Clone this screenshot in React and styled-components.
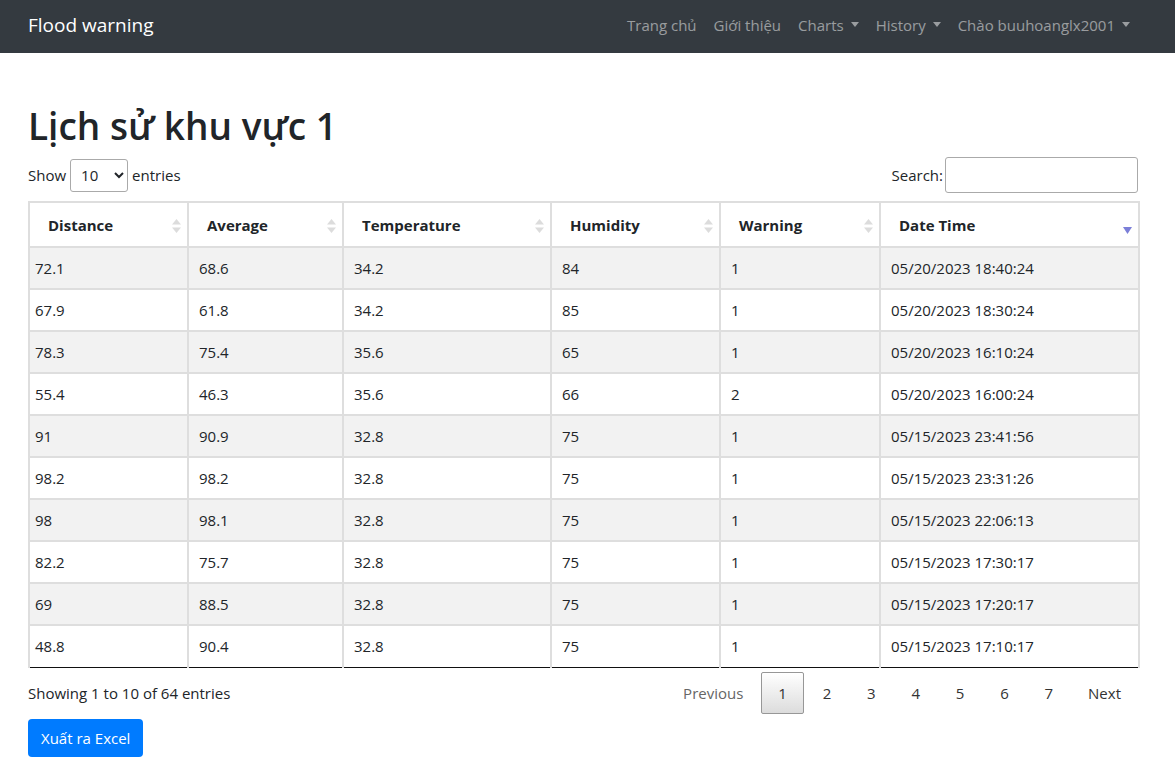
import React from "react";
import styled, { createGlobalStyle } from "styled-components";

const GlobalStyle = createGlobalStyle`
  body {
    margin: 0;
    font-family: "Open Sans", "Noto Sans", sans-serif;
    font-size: 15px;
    color: #212529;
    background: #fff;
  }
`;

const rows = [
  ["72.1", "68.6", "34.2", "84", "1", "05/20/2023 18:40:24"],
  ["67.9", "61.8", "34.2", "85", "1", "05/20/2023 18:30:24"],
  ["78.3", "75.4", "35.6", "65", "1", "05/20/2023 16:10:24"],
  ["55.4", "46.3", "35.6", "66", "2", "05/20/2023 16:00:24"],
  ["91", "90.9", "32.8", "75", "1", "05/15/2023 23:41:56"],
  ["98.2", "98.2", "32.8", "75", "1", "05/15/2023 23:31:26"],
  ["98", "98.1", "32.8", "75", "1", "05/15/2023 22:06:13"],
  ["82.2", "75.7", "32.8", "75", "1", "05/15/2023 17:30:17"],
  ["69", "88.5", "32.8", "75", "1", "05/15/2023 17:20:17"],
  ["48.8", "90.4", "32.8", "75", "1", "05/15/2023 17:10:17"],
];

const columns = [
  { name: "Distance", width: 159 },
  { name: "Average", width: 155 },
  { name: "Temperature", width: 208 },
  { name: "Humidity", width: 169 },
  { name: "Warning", width: 160 },
  { name: "Date Time", width: 259, sorted: true },
];

// navbar
const Navbar = styled.nav`
  height: 53px;
  background: #343a40;
  display: flex;
  align-items: center;
  justify-content: space-between;
  padding: 0 45px 0 28px;
`;

const Brand = styled.a`
  color: #fff;
  font-size: 19px;
  text-decoration: none;
  padding-bottom: 3px;
`;

const NavList = styled.div`
  display: flex;
  align-items: center;
  gap: 17px;
  padding-bottom: 4px;
`;

const NavLink = styled.a`
  color: rgba(255, 255, 255, 0.5);
  font-size: 15px;
  text-decoration: none;
  display: flex;
  align-items: center;

  &::after {
    content: ${({ caret }) => (caret ? '""' : "none")};
    display: inline-block;
    margin-left: 7px;
    border-top: 5px solid rgba(255, 255, 255, 0.5);
    border-left: 4px solid transparent;
    border-right: 4px solid transparent;
  }
`;

const Container = styled.main`
  padding: 48px 0 0 28px;
  width: 1110px;
`;

const Title = styled.h1`
  margin: 0;
  font-size: 37px;
  font-weight: 600;
  line-height: 50px;
`;

const Toolbar = styled.div`
  display: flex;
  justify-content: space-between;
  align-items: center;
  margin-top: 6px;
  height: 36px;
`;

const Label = styled.label`
  display: flex;
  align-items: center;
  gap: ${({ $tight }) => ($tight ? "2px" : "4px")};
  font-size: 15px;
`;

const Select = styled.select`
  width: 58px;
  height: 33px;
  border: 1px solid #aaa;
  border-radius: 3px;
  font-family: inherit;
  font-size: 15px;
  padding: 0 0 0 6px;
  background: #fff;
  color: #212529;
`;

const SearchInput = styled.input`
  width: 193px;
  height: 36px;
  box-sizing: border-box;
  border: 1px solid #aaa;
  border-radius: 3px;
`;

const Table = styled.table`
  margin-top: 8px;
  width: 1109px;
  table-layout: fixed;
  border-collapse: collapse;
  border: 2px solid #dedede;
  border-bottom: 1px solid #111;
`;

const Th = styled.th`
  position: relative;
  text-align: left;
  font-size: 15px;
  font-weight: 700;
  height: 45px;
  padding: 0 18px;
  border: 2px solid #dedede;
  border-bottom: 1px solid #111;
  box-sizing: border-box;
`;

const SortIcon = styled.svg`
  position: absolute;
  right: 6px;
  top: ${({ $desc }) => ($desc ? "24px" : "16px")};
`;

const Tr = styled.tr`
  background: ${({ $odd }) => ($odd ? "#f2f2f2" : "#fff")};

  &:last-child td {
    border-bottom: 1px solid #111;
  }
`;

const Td = styled.td`
  height: 42px;
  padding: 0 10px;
  font-size: 15px;
  border: 2px solid #dedede;
  box-sizing: border-box;

  &:first-child {
    padding-left: 5px;
  }
`;

const Footer = styled.div`
  display: flex;
  justify-content: space-between;
  align-items: center;
  margin-top: 4px;
`;

const Info = styled.div`
  font-size: 15px;
`;

const Pagination = styled.div`
  display: flex;
  align-items: center;
  margin-right: 1px;
`;

const PageButton = styled.a`
  box-sizing: border-box;
  min-width: 42.4px;
  height: 42px;
  display: flex;
  align-items: center;
  justify-content: center;
  padding: 0 ${({ $wide }) => ($wide ? "15px" : "0")};
  margin-left: 2px;
  font-size: 15px;
  color: ${({ $disabled }) => ($disabled ? "#666" : "#333")};
  border: 1px solid ${({ $current }) => ($current ? "#979797" : "transparent")};
  border-radius: 2px;
  background: ${({ $current }) =>
    $current ? "linear-gradient(to bottom, #fff 0%, #dcdcdc 100%)" : "transparent"};
`;

const ExcelButton = styled.button`
  margin-top: 5px;
  height: 38px;
  padding: 0 13px;
  background: #007bff;
  color: #fff;
  border: none;
  border-radius: 4px;
  font-family: inherit;
  font-size: 15px;
`;

const BothArrows = () => (
  <SortIcon width="9" height="14" viewBox="0 0 9 14">
    <path d="M4.5 0 L9 5.5 H0 Z" fill="#dcdcdc" />
    <path d="M4.5 14 L9 8.5 H0 Z" fill="#dcdcdc" />
  </SortIcon>
);

const DescArrow = () => (
  <SortIcon $desc width="9" height="7" viewBox="0 0 9 7">
    <path d="M0 0 H9 L4.5 7 Z" fill="#7b7fd8" />
  </SortIcon>
);

export default function App() {
  return (
    <>
      <GlobalStyle />
      <Navbar>
        <Brand href="#">Flood warning</Brand>
        <NavList>
          <NavLink href="#">Trang chủ</NavLink>
          <NavLink href="#">Giới thiệu</NavLink>
          <NavLink href="#" caret>Charts</NavLink>
          <NavLink href="#" caret>History</NavLink>
          <NavLink href="#" caret>Chào buuhoanglx2001</NavLink>
        </NavList>
      </Navbar>
      <Container>
        <Title>Lịch sử khu vực 1</Title>
        <Toolbar>
          <Label>
            Show
            <Select defaultValue="10">
              <option>10</option>
              <option>25</option>
              <option>50</option>
              <option>100</option>
            </Select>
            entries
          </Label>
          <Label $tight>
            Search:
            <SearchInput type="search" />
          </Label>
        </Toolbar>
        <Table>
          <colgroup>
            {columns.map((c) => (
              <col key={c.name} style={{ width: c.width }} />
            ))}
          </colgroup>
          <thead>
            <tr>
              {columns.map((c) => (
                <Th key={c.name}>
                  {c.name}
                  {c.sorted ? <DescArrow /> : <BothArrows />}
                </Th>
              ))}
            </tr>
          </thead>
          <tbody>
            {rows.map((r, i) => (
              <Tr key={i} $odd={i % 2 === 0}>
                {r.map((v, j) => (
                  <Td key={j}>{v}</Td>
                ))}
              </Tr>
            ))}
          </tbody>
        </Table>
        <Footer>
          <Info>Showing 1 to 10 of 64 entries</Info>
          <Pagination>
            <PageButton $wide $disabled>Previous</PageButton>
            <PageButton $current>1</PageButton>
            {[2, 3, 4, 5, 6, 7].map((n) => (
              <PageButton key={n}>{n}</PageButton>
            ))}
            <PageButton $wide>Next</PageButton>
          </Pagination>
        </Footer>
        <ExcelButton>Xuất ra Excel</ExcelButton>
      </Container>
    </>
  );
}
